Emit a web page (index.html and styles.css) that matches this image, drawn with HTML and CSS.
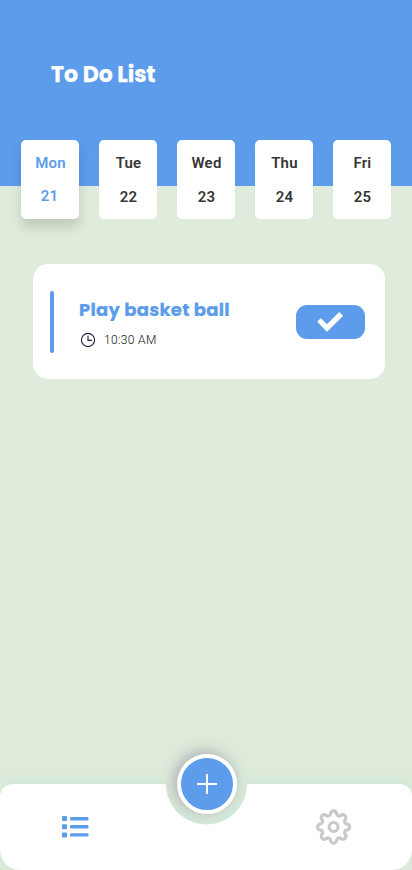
FILE: index.html
```html
<!DOCTYPE html>
<html lang="en">
<head>
<meta charset="utf-8">
<meta name="viewport" content="width=device-width, initial-scale=1">
<title>To Do List</title>
<link rel="stylesheet" href="styles.css">
</head>
<body>
<div class="app">
  <header class="header"><h1>To Do List</h1></header>
  <div class="days">
    <button class="day active"><span>Mon</span><span>21</span></button>
    <button class="day"><span>Tue</span><span>22</span></button>
    <button class="day"><span>Wed</span><span>23</span></button>
    <button class="day"><span>Thu</span><span>24</span></button>
    <button class="day"><span>Fri</span><span>25</span></button>
  </div>
  <main>
    <article class="task">
      <div class="bar"></div>
      <div class="info">
        <h2>Play basket ball</h2>
        <div class="time">
          <svg width="16" height="16" viewBox="0 0 16 16" fill="none" stroke="#251b3c" stroke-width="1.1"><circle cx="8" cy="8" r="6.6"/><path d="M8 3.8V8.4H12"/></svg>
          <span>10:30 AM</span>
        </div>
      </div>
      <button class="done" aria-label="Done">
        <svg width="28" height="22" viewBox="0 0 28 22" fill="#fff" stroke="#fff" stroke-width="1.6" stroke-linejoin="round"><path d="M1.2 10.8L3.8 8.2L10 14.2L22.2 2L25.2 4.8L10 19.8Z"/></svg>
      </button>
    </article>
  </main>
  <footer class="footer">
    <nav class="nav">
      <svg width="28" height="24" viewBox="0 0 28 24" fill="#5c9ceb"><rect x="1" y="1" width="5" height="5" rx=".8"/><rect x="1" y="9.2" width="5" height="5" rx=".8"/><rect x="1" y="17.4" width="5" height="5" rx=".8"/><rect x="9" y="2" width="18.5" height="3.4" rx="1"/><rect x="9" y="10.1" width="18.5" height="3.4" rx="1"/><rect x="9" y="18.2" width="18.5" height="3.4" rx="1"/></svg>
      <svg width="38" height="38" viewBox="-19.6 -19 38 38" fill="none" stroke="#c8c9cb" stroke-width="3.2"><path d="M-3.1 -13A3.1 3.1 0 0 1 3.1 -13A2.5 2.5 0 0 0 7 -11.4A3.1 3.1 0 0 1 11.4 -7A2.5 2.5 0 0 0 13 -3.1A3.1 3.1 0 0 1 13 3.1A2.5 2.5 0 0 0 11.4 7A3.1 3.1 0 0 1 7 11.4A2.5 2.5 0 0 0 3.1 13A3.1 3.1 0 0 1 -3.1 13A2.5 2.5 0 0 0 -7 11.4A3.1 3.1 0 0 1 -11.4 7A2.5 2.5 0 0 0 -13 3.1A3.1 3.1 0 0 1 -13 -3.1A2.5 2.5 0 0 0 -11.4 -7A3.1 3.1 0 0 1 -7 -11.4A2.5 2.5 0 0 0 -3.1 -13Z"/><circle r="4.5"/></svg>
    </nav>
    <button class="add" aria-label="Add task">
      <svg width="20" height="20" viewBox="0 0 20 20" stroke="#fff" stroke-width="2"><path d="M10 0V20M0 10H20"/></svg>
    </button>
  </footer>
</div>
</body>
</html>
```
FILE: styles.css
```css
* { box-sizing: border-box; }
body { margin: 0; font-family: Roboto, sans-serif; }
button { border: 0; padding: 0; font: inherit; }
svg { display: block; }
h1, h2 { margin: 0; font-family: Poppins, Inter, sans-serif; }
.app {
  height: 870px;
  display: flex;
  flex-direction: column;
  background: #dfebdb;
  overflow: hidden;
}
.header { height: 186px; background: #5c9ceb; padding: 60px 51px 0; flex: none; }
h1 {
  font-size: 22px;
  line-height: 30px;
  font-weight: 700;
  color: #fff;
  -webkit-text-stroke: .25px #fff;
}
.days { display: flex; gap: 20px; margin: -46px 0 0 21px; }
.day {
  width: 58px;
  height: 79px;
  border-radius: 5px;
  background: #fff;
  color: #363636;
  display: flex;
  flex-direction: column;
  align-items: center;
  gap: 16px;
  padding-top: 14px;
  font-size: 15px;
  line-height: 18px;
  font-weight: 600;
  letter-spacing: .2px;
}
.day span { padding-left: 1px; }
.day.active {
  color: #5c9ceb;
  gap: 15px;
  box-shadow: 0 8px 12px rgba(0, 0, 0, .14);
}
.day.active span:last-child { padding: 0 1px 0 0; }
.task {
  width: 352px;
  height: 115px;
  margin: 45px 0 0 33px;
  padding: 0 20px 0 17px;
  display: flex;
  align-items: center;
  border-radius: 15px;
  background: #fff;
}
.bar { width: 4px; height: 62px; border-radius: 2px; background: #5c9ceb; }
.info { flex: 1; padding: 1px 0 0 25px; }
h2 {
  font-size: 18px;
  line-height: 27px;
  font-weight: 700;
  letter-spacing: .25px;
  color: #5c9ceb;
  white-space: nowrap;
  -webkit-text-stroke: .2px #5c9ceb;
}
.time {
  display: flex;
  align-items: center;
  gap: 8px;
  margin: 8px 0 0 1px;
  font-size: 12px;
  line-height: 18px;
  font-weight: 300;
  letter-spacing: .33px;
  color: #111;
}
.done {
  width: 69px;
  height: 34px;
  border-radius: 11px;
  background: #5c9ceb;
  display: flex;
  align-items: center;
  justify-content: center;
}
.footer {
  position: relative;
  height: 86px;
  margin-top: auto;
  filter: drop-shadow(0 -4px 7px rgba(185, 228, 207, .5));
}
.nav {
  height: 86px;
  padding: 0 60px 0 61px;
  display: flex;
  align-items: center;
  justify-content: space-between;
  border-radius: 12px 12px 20px 20px;
  background: #fff;
  -webkit-mask: radial-gradient(circle at 206.5px 0, transparent 40px, #000 40.8px);
  mask: radial-gradient(circle at 206.5px 0, transparent 40px, #000 40.8px);
}
.add {
  position: absolute;
  left: 177px;
  top: -30px;
  width: 60px;
  height: 60px;
  border: 4px solid #fff;
  border-radius: 50%;
  background: #5c9ceb;
  display: flex;
  align-items: center;
  justify-content: center;
  box-shadow: -3px -2px 13px rgba(130, 80, 130, .4);
}
```
